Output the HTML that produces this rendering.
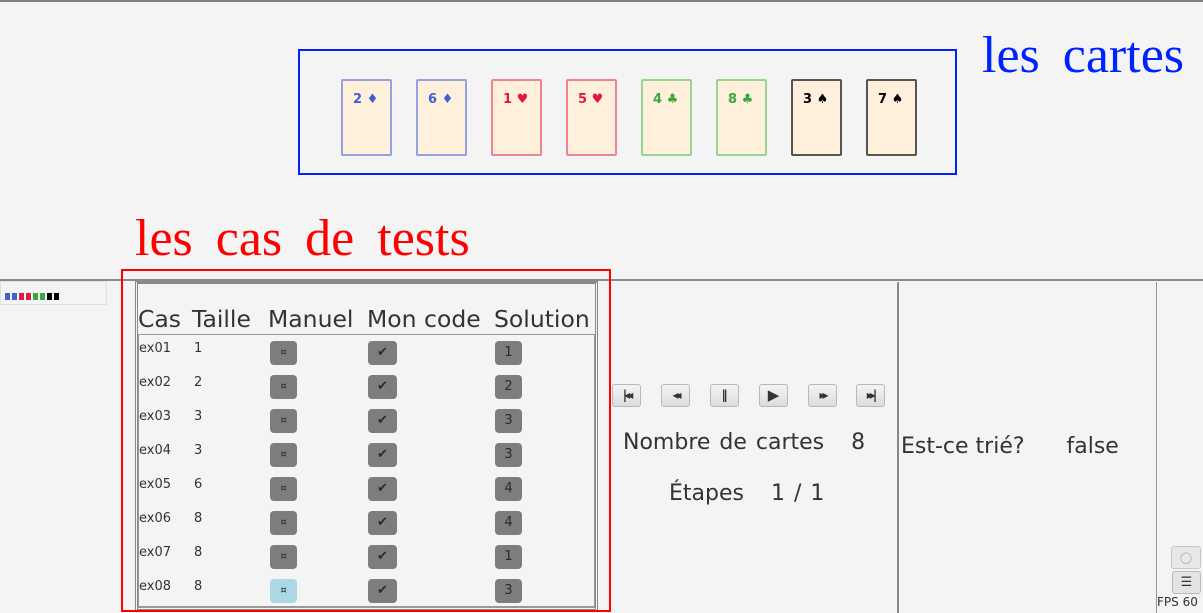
<!DOCTYPE html>
<html><head><meta charset="utf-8"><style>
*{margin:0;padding:0;box-sizing:border-box}
body{width:1203px;height:613px;background:#f4f4f4;position:relative;overflow:hidden;font-family:"DejaVu Sans","Liberation Sans",sans-serif;color:#333}
.a{position:absolute}
.card{position:absolute;top:79px;width:51px;height:77px;background:#fff0dc;border:2px solid;border-radius:2px;font-weight:bold;font-size:13px;padding:11px 0 0 10px}
.btn{position:absolute;width:27px;height:24px;border-radius:4px;background:#7d7d7d;color:#2a2a2a;font-size:13px;text-align:center;line-height:24px}
.txt{position:absolute;font-size:13px;color:#333}
.hd{position:absolute;top:305px;font-size:23.5px;color:#333}
.mb{position:absolute;top:384px;width:29px;height:23px;border:1px solid #b8b8b8;border-radius:3px;background:linear-gradient(#f4f4f4,#dcdcdc);font-size:12px;font-weight:bold;text-align:center;line-height:21px;color:#333;letter-spacing:-3px}
</style></head><body>
<div class="a" style="left:0;top:0;width:1203px;height:2px;background:#808080"></div>
<div class="a" style="left:298px;top:49px;width:659px;height:126px;border:2px solid #0022ff"></div>
<div class="a" style="left:982px;top:26px;font-family:'Liberation Serif',serif;font-size:52px;color:#0022ff;word-spacing:10px">les cartes</div>
<div class="card" style="left:341px;border-color:#93a3e2;color:#4060d8">2 ♦</div>
<div class="card" style="left:416px;border-color:#93a3e2;color:#4060d8">6 ♦</div>
<div class="card" style="left:491px;border-color:#ec8494;color:#e01a40">1 ♥</div>
<div class="card" style="left:566px;border-color:#ec8494;color:#e01a40">5 ♥</div>
<div class="card" style="left:641px;border-color:#98d494;color:#3aa83a">4 ♣</div>
<div class="card" style="left:716px;border-color:#98d494;color:#3aa83a">8 ♣</div>
<div class="card" style="left:791px;border-color:#555;color:#000">3 ♠</div>
<div class="card" style="left:866px;border-color:#555;color:#000">7 ♠</div>
<div class="a" style="left:135px;top:209px;font-family:'Liberation Serif',serif;font-size:52px;color:#ff0000;word-spacing:10px">les cas de tests</div>
<div class="a" style="left:0;top:279px;width:1203px;height:2px;background:#8a8a8a"></div>
<div class="a" style="left:0;top:281px;width:107px;height:24px;border:1px solid #e0e0e0;background:#f4f4f4"></div>
<div class="a" style="left:5px;top:293px;height:7px;width:54px;background:repeating-linear-gradient(90deg,transparent 0 5px,#f4f4f4 5px 7px),linear-gradient(90deg,#4060d8 0 14px,#e01a40 14px 28px,#3aa83a 28px 42px,#000 42px)"></div>
<div class="a" style="left:135px;top:281px;width:463px;height:331px;border-left:3px double #888;border-right:3px double #888;border-top:3px solid #888;border-bottom:3px double #888"></div>
<div class="a" style="left:138px;top:334px;width:457px;height:274px;border:1px solid #999;border-bottom:2px solid #999"></div>
<div class="a" style="left:897px;top:282px;width:2px;height:331px;background:#888"></div>
<div class="a" style="left:1156px;top:282px;width:1px;height:331px;background:#999"></div>
<div class="hd" style="left:138px">Cas</div>
<div class="hd" style="left:192px">Taille</div>
<div class="hd" style="left:268px">Manuel</div>
<div class="hd" style="left:367px">Mon code</div>
<div class="hd" style="left:494px">Solution</div>
<div id="rows"></div>
<div class="mb" style="left:612px">|◂◂</div>
<div class="mb" style="left:661px">◂◂</div>
<div class="mb" style="left:710px;letter-spacing:0">‖</div>
<div class="mb" style="left:759px;font-size:15px;letter-spacing:0">▶</div>
<div class="mb" style="left:808px">▸▸</div>
<div class="mb" style="left:856px">▸▸|</div>
<div class="a" style="left:623px;top:430px;font-size:22px;word-spacing:2px">Nombre de cartes &nbsp;&nbsp;8</div>
<div class="a" style="left:669px;top:481px;font-size:22px;word-spacing:2px">Étapes &nbsp;&nbsp;1 / 1</div>
<div class="a" style="left:901px;top:434px;font-size:22px">Est-ce trié? &nbsp;&nbsp;&nbsp;&nbsp;&nbsp;false</div>
<div class="a" style="left:1171px;top:546px;width:30px;height:23px;border:1px solid #c8c8c8;border-radius:3px;background:#e8e8e8;color:#aaa;font-size:11px;text-align:center;line-height:21px">◯</div>
<div class="a" style="left:1172px;top:571px;width:29px;height:23px;border:1px solid #b8b8b8;border-radius:3px;background:#e4e4e4;font-size:13px;text-align:center;line-height:21px">☰</div>
<div class="a" style="left:1157px;top:595px;font-size:12px;color:#333">FPS 60</div>
<div class="a" style="left:121px;top:269px;width:490px;height:343px;border:2px solid #ff0000"></div>
<script>
var d=[["ex01",1,1],["ex02",2,2],["ex03",3,3],["ex04",3,3],["ex05",6,4],["ex06",8,4],["ex07",8,1],["ex08",8,3]],h="";
d.forEach(function(r,i){var y=341+i*34;
h+='<div class="txt" style="left:139px;top:'+y+'px">'+r[0]+'</div><div class="txt" style="left:194px;top:'+y+'px">'+r[1]+'</div>';
h+='<div class="btn" style="left:270px;top:'+y+'px;font-size:10px;'+(i==7?'background:#acd8e6':'')+'">¤</div>';
h+='<div class="btn" style="left:368px;top:'+y+'px;width:29px">✔</div>';
h+='<div class="btn" style="left:495px;top:'+y+'px">'+r[2]+'</div>';});
document.getElementById("rows").innerHTML=h;
</script>
</body></html>
